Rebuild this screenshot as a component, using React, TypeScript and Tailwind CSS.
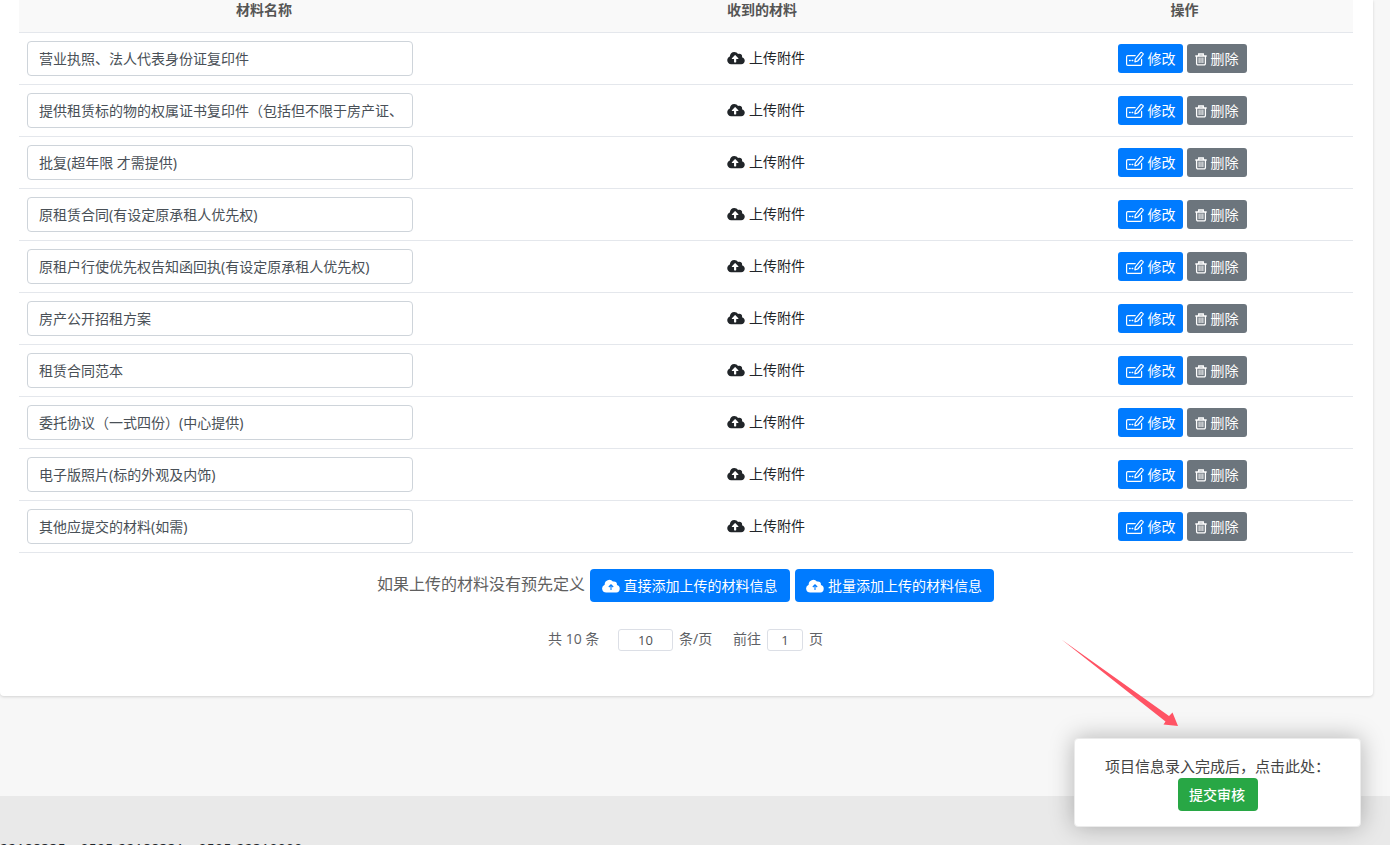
import React from "react";
import { FaCloudUploadAlt } from "react-icons/fa";

const materials = [
  "营业执照、法人代表身份证复印件",
  "提供租赁标的物的权属证书复印件（包括但不限于房产证、",
  "批复(超年限 才需提供)",
  "原租赁合同(有设定原承租人优先权)",
  "原租户行使优先权告知函回执(有设定原承租人优先权)",
  "房产公开招租方案",
  "租赁合同范本",
  "委托协议（一式四份）(中心提供)",
  "电子版照片(标的外观及内饰)",
  "其他应提交的材料(如需)",
];

function EditIcon() {
  return (
    <svg width="18" height="16" viewBox="0 0 18 16" fill="none" stroke="currentColor" strokeWidth="1.2" strokeLinejoin="round" strokeLinecap="round">
      <path d="M9.2 4.6H1.8A1.2 1.2 0 0 0 .6 5.8v7.4a1.2 1.2 0 0 0 1.2 1.2h12.6a1.2 1.2 0 0 0 1.2-1.2V8.4" />
      <path d="M9.3 8.2 14.6 1.7a.9.9 0 0 1 1.3-.1l1 .8a.9.9 0 0 1 .1 1.3l-5.3 6.3-2.8.8z" />
      <path d="M3.6 9.5h.5M6.2 9.5h.5" strokeWidth="1.5" />
    </svg>
  );
}

function TrashIcon() {
  return (
    <svg width="12" height="14" viewBox="0 0 12 14" fill="none" stroke="currentColor" strokeWidth="1.3">
      <path d="M.3 4h11.4M3.7 3.8V2h4.6v1.8M1.6 4v7.6a1.2 1.2 0 0 0 1.2 1.2h6.4a1.2 1.2 0 0 0 1.2-1.2V4" />
      <path d="M4.1 5.5v5.6M6 5.5v5.6M7.9 5.5v5.6" strokeWidth="1" />
    </svg>
  );
}

function CloudIcon() {
  return (
    <svg width="18" height="14" viewBox="0 0 18 14">
      <path fill="currentColor" d="M4.2 13.6A4.1 4.1 0 0 1 2.7 5.7 4.6 4.6 0 0 1 10.9 2.6 3 3 0 0 1 14.9 6 3.9 3.9 0 0 1 14.4 13.6Z" />
      <path d="M9 11V5.9M6.8 8 9 5.8 11.2 8" fill="none" stroke="#007bff" strokeWidth="1.1" />
    </svg>
  );
}

function MaterialRow({ name }: { name: string }) {
  return (
    <div className="grid h-[52px] grid-cols-[490px_506px_338px] items-center border-b border-[#e4e7ec]">
      <div className="pl-2">
        <div className="flex h-[35px] w-[386px] items-center overflow-hidden rounded border border-[#ced4da] bg-white px-[11px] pb-px whitespace-nowrap text-[#495057]">
          {name}
        </div>
      </div>
      <div className="flex items-center justify-center gap-1 pb-0.5 pl-2 text-[#212529]">
        <FaCloudUploadAlt className="h-[14px] w-[18px]" />
        <span>上传附件</span>
      </div>
      <div className="flex justify-center gap-1 pr-[3px] text-white">
        <button className="flex h-[29px] w-[65px] items-center gap-1 rounded-[3px] bg-[#007bff] pl-[7.5px]">
          <EditIcon />
          <span className="pb-px">修改</span>
        </button>
        <button className="flex h-[29px] w-[60px] items-center gap-[3.5px] rounded-[3px] bg-[#6c757d] pl-2">
          <TrashIcon />
          <span className="pb-px">删除</span>
        </button>
      </div>
    </div>
  );
}

function AddButton({ label, width }: { label: string; width: string }) {
  return (
    <button className={`flex h-[33px] items-center justify-center gap-1 rounded bg-[#007bff] pr-px text-white ${width}`}>
      <CloudIcon />
      <span className="pb-px">{label}</span>
    </button>
  );
}

export default function App() {
  return (
    <div className="relative flex h-[845px] w-[1390px] flex-col overflow-hidden bg-[#f7f7f7] font-['Noto_Sans','Noto_Sans_CJK_SC',sans-serif] text-[14px] leading-[21px] text-[#606266]">
      <main className="h-[696px] w-[1373px] shrink-0 rounded-b bg-white pl-[19px] shadow-[0_1px_3px_rgba(0,0,0,0.15)]">
        <div className="grid h-[33px] w-[1334px] grid-cols-[490px_506px_338px] border-b border-[#e4e7ec] bg-[#f9f9f9] text-center leading-[19px] font-bold text-[#555]">
          <div>材料名称</div>
          <div>收到的材料</div>
          <div className="pl-px">操作</div>
        </div>
        <div className="w-[1334px]">
          {materials.map((name) => (
            <MaterialRow key={name} name={name} />
          ))}
        </div>
        <div className="mt-4 flex w-[1334px] items-start pl-[358px]">
          <span className="w-[213px] pt-[3px] text-[16px] leading-6 whitespace-nowrap text-[#606060]">如果上传的材料没有预先定义</span>
          <AddButton label="直接添加上传的材料信息" width="w-[200px]" />
          <span className="w-[5px]" />
          <AddButton label="批量添加上传的材料信息" width="w-[199px]" />
        </div>
        <div className="mt-[27px] flex h-[22px] items-center pl-[529px]">
          <span className="w-[70px] pb-[3px] font-['Open_Sans','Noto_Sans_CJK_SC',sans-serif] whitespace-nowrap">共 10 条</span>
          <span className="flex h-[22px] w-[55px] items-center justify-center rounded-[3px] border border-[#dcdfe6] font-['Open_Sans'] text-[13px] text-[#505255]">10</span>
          <span className="ml-1.5 w-[54px] pb-[3px] whitespace-nowrap">条/页</span>
          <span className="pb-[3px]">前往</span>
          <span className="ml-1.5 flex h-[22px] w-9 items-center justify-center rounded-[3px] border border-[#dcdfe6] font-['Open_Sans'] text-[13px] text-[#505255]">1</span>
          <span className="ml-1.5 pb-[3px]">页</span>
        </div>
      </main>
      <footer className="mt-[100px] h-[49px] shrink-0 bg-[#e9e9e9] pt-[42px] text-[#212529]">
        <div className="font-['Open_Sans','Noto_Sans_CJK_SC',sans-serif] tracking-[0.26px] whitespace-nowrap">22188335、0595-22188331、0595-22310000</div>
      </footer>

      <aside className="absolute top-[738px] left-[1074px] flex h-[89px] w-[287px] flex-col items-center rounded border border-[#ebebeb] bg-white pt-4 shadow-[0_0_24px_rgba(0,0,0,0.28)]">
        <p className="h-[23px] text-[15px] leading-[23px] whitespace-nowrap text-[#444]">项目信息录入完成后，点击此处：</p>
        <button className="h-[33px] w-20 rounded bg-[#28a745] pr-px pb-px font-medium text-white">提交审核</button>
      </aside>
      <svg className="absolute top-[638px] left-[1060px]" width="122" height="92" viewBox="0 0 122 92">
        <path d="M1.5 1.5 109 78 112.5 74.5 118 88 103.5 86.5 105.5 83.5Z" fill="#ff5364" />
      </svg>
    </div>
  );
}
